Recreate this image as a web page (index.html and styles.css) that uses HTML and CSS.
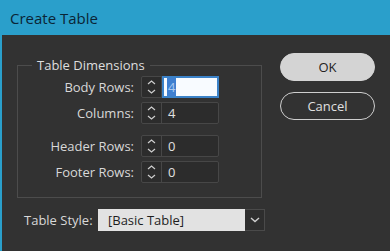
FILE: index.html
```html
<!DOCTYPE html>
<html lang="en">
<head>
  <meta charset="UTF-8">
  <title>Create Table</title>
  <link rel="stylesheet" href="styles.css">
</head>
<body>
  <div class="window">
    <div class="titlebar">Create Table</div>
    <div class="content">
      <div class="left">
        <fieldset class="group">
          <legend>Table Dimensions</legend>
          <div class="field">
            <label>Body Rows:</label>
            <div class="spinner">
              <span class="arrows">
                <svg width="9" height="16" viewBox="0 0 9 16"><polyline points="1,5 4.5,2 8,5" /><polyline points="1,11 4.5,14 8,11" /></svg>
              </span>
              <span class="value focused"><span class="sel">4</span></span>
            </div>
          </div>
          <div class="field">
            <label>Columns:</label>
            <div class="spinner">
              <span class="arrows">
                <svg width="9" height="16" viewBox="0 0 9 16"><polyline points="1,5 4.5,2 8,5" /><polyline points="1,11 4.5,14 8,11" /></svg>
              </span>
              <span class="value">4</span>
            </div>
          </div>
          <div class="field spaced">
            <label>Header Rows:</label>
            <div class="spinner">
              <span class="arrows">
                <svg width="9" height="16" viewBox="0 0 9 16"><polyline points="1,5 4.5,2 8,5" /><polyline points="1,11 4.5,14 8,11" /></svg>
              </span>
              <span class="value">0</span>
            </div>
          </div>
          <div class="field">
            <label>Footer Rows:</label>
            <div class="spinner">
              <span class="arrows">
                <svg width="9" height="16" viewBox="0 0 9 16"><polyline points="1,5 4.5,2 8,5" /><polyline points="1,11 4.5,14 8,11" /></svg>
              </span>
              <span class="value">0</span>
            </div>
          </div>
        </fieldset>
        <div class="style-row">
          <label>Table Style:</label>
          <div class="select">
            <span class="select-text">[Basic Table]</span>
            <span class="select-btn">
              <svg width="10" height="6" viewBox="0 0 10 6"><polyline points="1,1 5,4.5 9,1" /></svg>
            </span>
          </div>
        </div>
      </div>
      <div class="buttons">
        <button class="btn primary">OK</button>
        <button class="btn">Cancel</button>
      </div>
    </div>
  </div>
</body>
</html>
```
FILE: styles.css
```css
body {
  margin: 0;
  font-family: "Open Sans", "Noto Sans", sans-serif;
  background-color: #323232;
}
.window {
  width: 390px;
  height: 251px;
  border-left: 2px solid #2a9fcb;
  box-sizing: border-box;
  background-color: #323232;
}
.titlebar {
  height: 35px;
  line-height: 36px;
  margin-left: -2px;
  padding-left: 10px;
  background-color: #2a9fcb;
  color: #0b2536;
  font-size: 15px;
}
.content {
  display: flex;
  padding-top: 22px;
}
.left {
  width: 263px;
}
.group {
  margin: 0 0 0 15px;
  width: 245px;
  height: 141px;
  box-sizing: border-box;
  border: 1px solid #4c4c4c;
  padding: 0;
}
.group legend {
  margin-left: 14px;
  padding: 0 5px;
  color: #dedede;
  font-size: 13px;
  line-height: 17px;
}
.field {
  display: flex;
  align-items: center;
  margin-top: 4px;
}
.field:first-of-type {
  margin-top: 2px;
}
.field.spaced {
  margin-top: 11px;
}
.field label {
  width: 116px;
  text-align: right;
  margin-right: 7px;
  color: #d8d8d8;
  font-size: 13px;
}
.spinner {
  display: flex;
  width: 78px;
  height: 22px;
  box-sizing: border-box;
  border: 1px solid #474747;
  border-radius: 2px;
  background-color: #2c2c2c;
}
.arrows {
  width: 19px;
  display: flex;
  align-items: center;
  justify-content: center;
  border-right: 1px solid #474747;
}
.arrows svg polyline {
  fill: none;
  stroke: #cfcfcf;
  stroke-width: 1.2;
}
.value {
  flex: 1;
  padding-left: 6px;
  color: #e0e0e0;
  font-size: 13px;
  line-height: 20px;
}
.value.focused {
  background-color: #f8fbff;
  border: 2px solid #3b82c8;
  margin: -1px -1px -1px 0;
  padding-left: 3px;
  line-height: 18px;
}
.sel {
  background-color: #3f7fd0;
  color: #a9c9f0;
  padding: 0 1px;
}
.style-row {
  display: flex;
  align-items: center;
  margin: 11px 0 0 22px;
}
.style-row label {
  flex-shrink: 0;
  width: 67px;
  white-space: nowrap;
  color: #d8d8d8;
  font-size: 13px;
  margin-right: 7px;
}
.select {
  display: flex;
  flex-shrink: 0;
  width: 167px;
  height: 22px;
}
.select-text {
  flex: 1;
  background-color: #e2e2e2;
  color: #1e1e1e;
  font-size: 13px;
  line-height: 22px;
  padding-left: 10px;
}
.select-btn {
  width: 20px;
  display: flex;
  align-items: center;
  justify-content: center;
  box-sizing: border-box;
  border: 1px solid #4a4a4a;
  border-left: none;
  background-color: #2e2e2e;
}
.select-btn svg polyline {
  fill: none;
  stroke: #cfcfcf;
  stroke-width: 1.4;
}
.buttons {
  display: flex;
  flex-direction: column;
  gap: 11px;
  margin: -4px 0 0 15px;
}
.btn {
  width: 95px;
  height: 28px;
  border-radius: 14px;
  border: 1px solid #cfcfcf;
  background: transparent;
  color: #e0e0e0;
  font-family: "Open Sans", "Noto Sans", sans-serif;
  font-size: 13px;
}
.btn.primary {
  background-color: #d4d4d4;
  color: #222;
  border-color: #d4d4d4;
}
```
